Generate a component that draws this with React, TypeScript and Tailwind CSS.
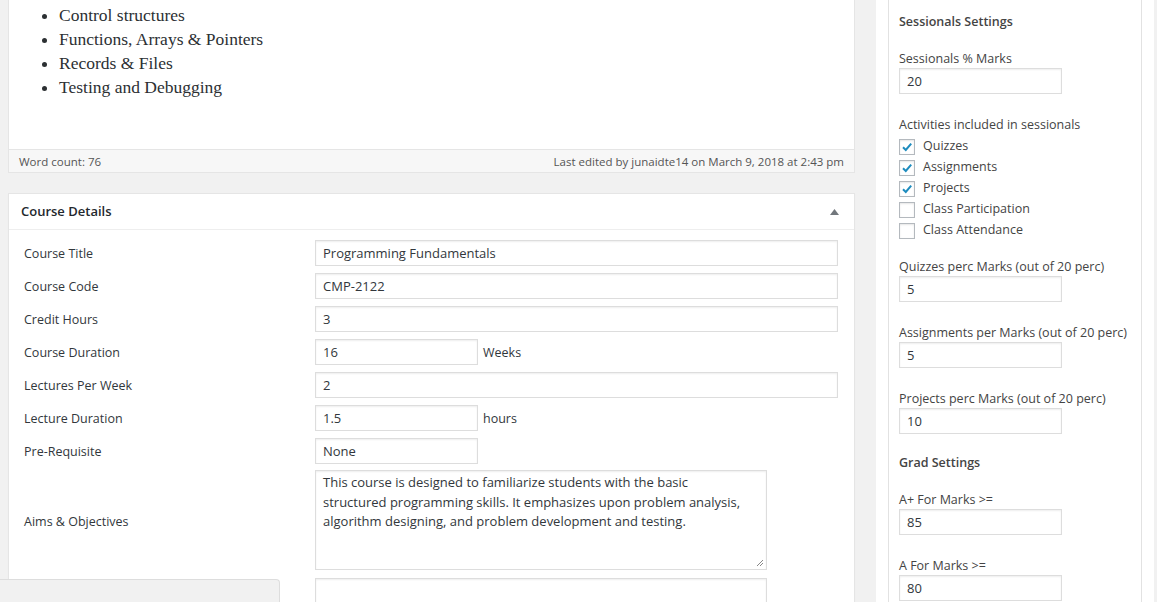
import React from "react";

const SANS = "font-['Open_Sans','Noto_Sans',sans-serif]";

const ROWS: { label: string; value: string; short?: boolean; suffix?: string }[] = [
  { label: "Course Title", value: "Programming Fundamentals" },
  { label: "Course Code", value: "CMP-2122" },
  { label: "Credit Hours", value: "3" },
  { label: "Course Duration", value: "16", short: true, suffix: "Weeks" },
  { label: "Lectures Per Week", value: "2" },
  { label: "Lecture Duration", value: "1.5", short: true, suffix: "hours" },
  { label: "Pre-Requisite", value: "None", short: true },
];

const ACTIVITIES = [
  { name: "Quizzes", checked: true },
  { name: "Assignments", checked: true },
  { name: "Projects", checked: true },
  { name: "Class Participation", checked: false },
  { name: "Class Attendance", checked: false },
];

const inputCls =
  "h-[26px] border border-[#ddd] bg-white px-[7px] text-[13px] leading-[25px] text-[#32373c] shadow-[inset_0_1px_2px_rgba(0,0,0,0.07)]";

function Field({ label, value }: { label: string; value: string }) {
  return (
    <div className="mb-[22px]">
      <div className="h-[18px] text-[12.5px] leading-[18px] text-[#444]">{label}</div>
      <div className={`${inputCls} w-[163px]`}>{value}</div>
    </div>
  );
}

export default function App() {
  return (
    <div className={`relative flex h-[602px] w-[1157px] overflow-hidden bg-[#f1f1f1] pl-[8px] ${SANS}`}>
      {/* main column */}
      <div className="w-[847px] shrink-0">
        {/* editor */}
        <div className="border-x border-b border-[#e5e5e5] bg-white">
          <div className="h-[149px] pt-[3px]">
            <ul className="list-disc pl-[50px] font-['Liberation_Serif','Georgia',serif] text-[17.5px] leading-[24px] text-[#2c3033]">
              <li>Control structures</li>
              <li>Functions, Arrays &amp; Pointers</li>
              <li>Records &amp; Files</li>
              <li>Testing and Debugging</li>
            </ul>
          </div>
          <div className="flex h-[23px] items-center justify-between border-t border-[#e5e5e5] bg-[#f7f7f7] px-[10px] pt-[1px] text-[11.5px] text-[#555]">
            <span>Word count: 76</span>
            <span>Last edited by junaidte14 on March 9, 2018 at 2:43 pm</span>
          </div>
        </div>

        {/* course details */}
        <div className="mt-[20px] border border-[#e5e5e5] bg-white shadow-[0_1px_1px_rgba(0,0,0,0.04)]">
          <div className="flex h-[36px] items-center justify-between border-b border-[#eee] px-[12px] pt-[1px]">
            <h2 className="text-[13px] font-semibold text-[#23282d]">Course Details</h2>
            <svg width="9" height="6" viewBox="0 0 9 6" className="mr-[3px]">
              <path d="M0 6 L4.5 0 L9 6 Z" fill="#72777c" />
            </svg>
          </div>
          <div className="px-[15px] pt-[10px]">
            {ROWS.map((r, i) => (
              <div key={r.label} className={`flex items-center ${i === ROWS.length - 1 ? "mb-[6px]" : "mb-[7px]"}`}>
                <div className="w-[291px] shrink-0 pt-[2px] text-[12.5px] text-[#32373c]">{r.label}</div>
                <div className={`${inputCls} ${r.short ? "w-[163px]" : "w-[523px]"}`}>{r.value}</div>
                {r.suffix && <span className="ml-[5px] pt-[2px] text-[12.5px] text-[#32373c]">{r.suffix}</span>}
              </div>
            ))}
            <div className="mb-[8px] flex items-center">
              <div className="w-[291px] shrink-0 pt-[4px] text-[12.5px] text-[#32373c]">Aims &amp; Objectives</div>
              <div className="relative h-[100px] w-[452px] border border-[#ddd] bg-white px-[7px] pt-[2px] text-[13px] leading-[19.5px] text-[#32373c] shadow-[inset_0_1px_2px_rgba(0,0,0,0.07)]">
                This course is designed to familiarize students with the basic
                <br />
                structured programming skills. It emphasizes upon problem analysis,
                <br />
                algorithm designing, and problem development and testing.
                <svg width="8" height="8" viewBox="0 0 8 8" className="absolute bottom-[2px] right-[2px]">
                  <path d="M7 1 L1 7 M7 4 L4 7" stroke="#888" strokeWidth="1" />
                </svg>
              </div>
            </div>
            <div className="flex">
              <div className="w-[291px] shrink-0" />
              <div className="h-[40px] w-[452px] border border-[#ddd] bg-white shadow-[inset_0_1px_2px_rgba(0,0,0,0.07)]" />
            </div>
          </div>
        </div>
      </div>

      {/* sidebar */}
      <div className="ml-[21px] w-[278px] shrink-0 bg-white px-[12px]">
        <div className="h-full border-x border-[#e2e2e2] px-[10px] pt-[13px]">
          <h3 className="mb-[19px] h-[18px] text-[12.5px] font-semibold leading-[18px] text-[#444]">Sessionals Settings</h3>
          <Field label="Sessionals % Marks" value="20" />
          <div className="mb-[17px] mt-[1px]">
            <div className="mb-[2px] text-[12.5px] leading-[18px] text-[#444]">Activities included in sessionals</div>
            {ACTIVITIES.map((a) => (
              <div key={a.name} className="flex h-[21px] items-center">
                <span className="flex h-[16px] w-[16px] items-center justify-center border border-[#b4b9be] bg-white shadow-[inset_0_1px_2px_rgba(0,0,0,0.1)]">
                  {a.checked && (
                    <svg width="12" height="12" viewBox="0 0 12 12">
                      <path d="M2 6.2 L4.8 9 L10.2 2.6" fill="none" stroke="#1e8cbe" strokeWidth="2" />
                    </svg>
                  )}
                </span>
                <span className="ml-[8px] text-[12.5px] text-[#444]">{a.name}</span>
              </div>
            ))}
          </div>
          <Field label="Quizzes perc Marks (out of 20 perc)" value="5" />
          <Field label="Assignments per Marks (out of 20 perc)" value="5" />
          <Field label="Projects perc Marks (out of 20 perc)" value="10" />
          <h3 className="mb-[19px] mt-[-2px] h-[18px] text-[12.5px] font-semibold leading-[18px] text-[#444]">Grad Settings</h3>
          <Field label="A+ For Marks >=" value="85" />
          <Field label="A For Marks >=" value="80" />
        </div>
      </div>

      {/* floating bar bottom-left */}
      <div className="absolute bottom-0 left-0 h-[23px] w-[280px] rounded-tr-[4px] border-r border-t border-[#ddd] bg-[#f1f1f1]" />
    </div>
  );
}
